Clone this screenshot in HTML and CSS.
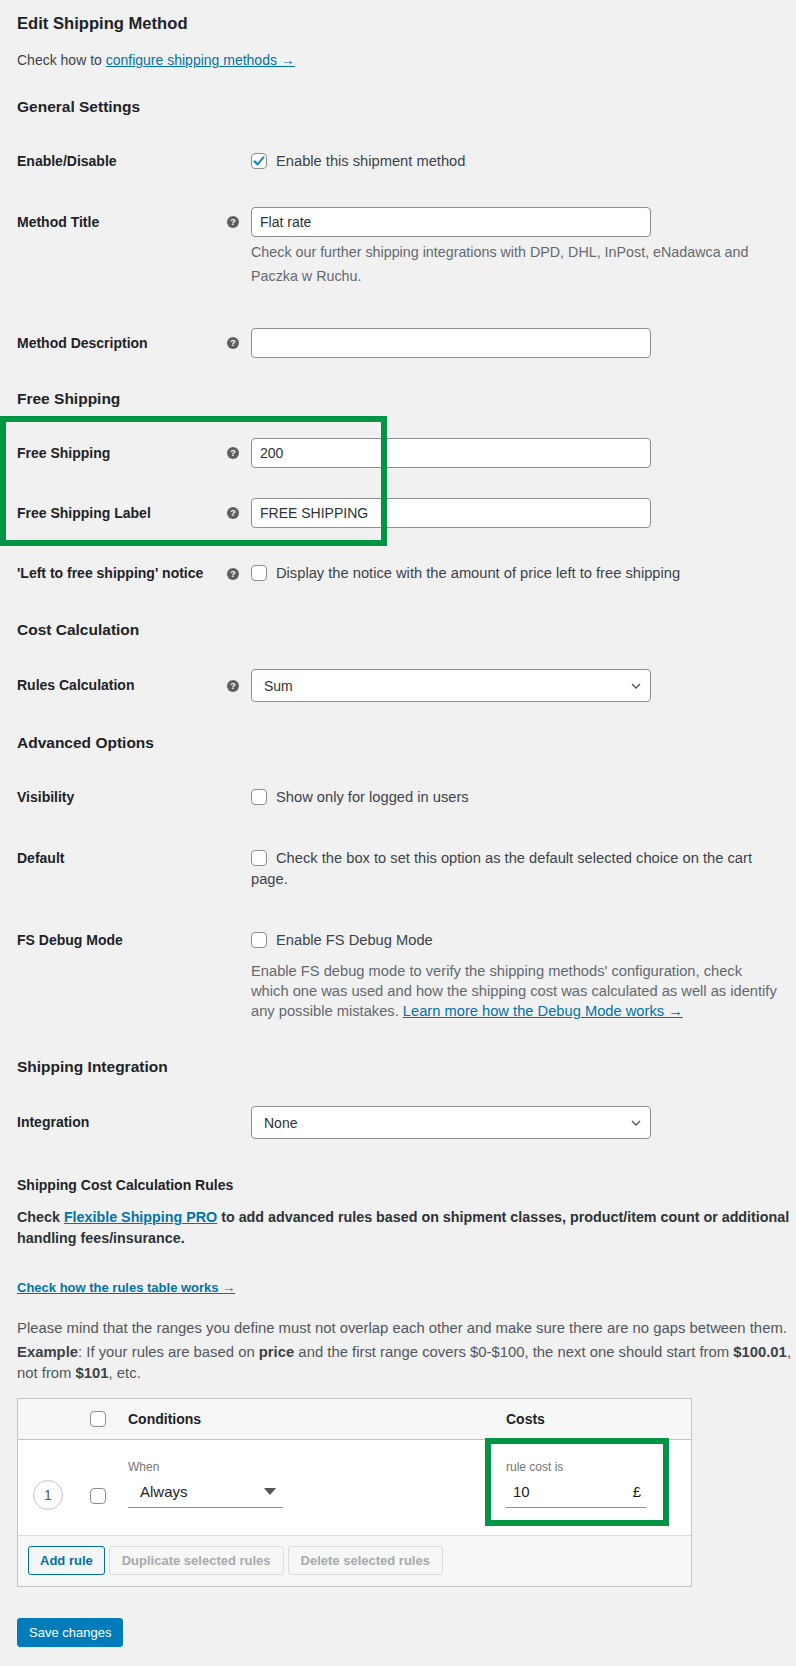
FILE: index.html
```html
<!DOCTYPE html>
<html lang="en">
<head>
<meta charset="utf-8">
<title>Edit Shipping Method</title>
<link rel="stylesheet" href="styles.css">
</head>
<body>
<div class="page">
  <h2 class="page-title">Edit Shipping Method</h2>
  <p class="intro">Check how to <a href="#">configure shipping methods →</a></p>

  <h3 class="section">General Settings</h3>
  <div class="row row-check">
    <div class="label">Enable/Disable</div>
    <div class="tip-col"></div>
    <div class="field"><label class="check"><span class="box checked"><svg viewBox="0 0 16 16" width="16" height="16"><path d="M3.6 8.4 L6.6 11.4 L12.4 4.4" fill="none" stroke="#1e8cbe" stroke-width="2.2" stroke-linecap="round" stroke-linejoin="round"/></svg></span>Enable this shipment method</label></div>
  </div>
  <div class="row row-input">
    <div class="label">Method Title</div>
    <div class="tip-col"><span class="tip">?</span></div>
    <div class="field">
      <input class="text-input" type="text" value="Flat rate">
      <p class="desc">Check our further shipping integrations with DPD, DHL, InPost, eNadawca and<br>Paczka w Ruchu.</p>
    </div>
  </div>
  <div class="row row-input">
    <div class="label">Method Description</div>
    <div class="tip-col"><span class="tip">?</span></div>
    <div class="field"><input class="text-input" type="text" value=""></div>
  </div>

  <h3 class="section">Free Shipping</h3>
  <div class="fs-group">
    <div class="row row-input">
      <div class="label">Free Shipping</div>
      <div class="tip-col"><span class="tip">?</span></div>
      <div class="field"><input class="text-input" type="text" value="200"></div>
    </div>
    <div class="row row-input">
      <div class="label">Free Shipping Label</div>
      <div class="tip-col"><span class="tip">?</span></div>
      <div class="field"><input class="text-input" type="text" value="FREE SHIPPING"></div>
    </div>
    <div class="annot annot-fs"></div>
  </div>
  <div class="row row-check">
    <div class="label">'Left to free shipping' notice</div>
    <div class="tip-col"><span class="tip">?</span></div>
    <div class="field"><label class="check"><span class="box"></span>Display the notice with the amount of price left to free shipping</label></div>
  </div>

  <h3 class="section">Cost Calculation</h3>
  <div class="row row-select">
    <div class="label">Rules Calculation</div>
    <div class="tip-col"><span class="tip">?</span></div>
    <div class="field">
      <div class="select"><span>Sum</span><svg viewBox="0 0 10 6" width="10" height="6"><path d="M1 1 L5 5 L9 1" fill="none" stroke="#50575e" stroke-width="1.4"/></svg></div>
    </div>
  </div>

  <h3 class="section">Advanced Options</h3>
  <div class="row row-check">
    <div class="label">Visibility</div>
    <div class="tip-col"></div>
    <div class="field"><label class="check"><span class="box"></span>Show only for logged in users</label></div>
  </div>
  <div class="row row-check">
    <div class="label">Default</div>
    <div class="tip-col"></div>
    <div class="field"><label class="check"><span class="box"></span>Check the box to set this option as the default selected choice on the cart<br>page.</label></div>
  </div>
  <div class="row row-check">
    <div class="label">FS Debug Mode</div>
    <div class="tip-col"></div>
    <div class="field">
      <label class="check"><span class="box"></span>Enable FS Debug Mode</label>
      <p class="note">Enable FS debug mode to verify the shipping methods' configuration, check<br>which one was used and how the shipping cost was calculated as well as identify<br>any possible mistakes. <a href="#">Learn more how the Debug Mode works →</a></p>
    </div>
  </div>

  <h3 class="section">Shipping Integration</h3>
  <div class="row row-select">
    <div class="label">Integration</div>
    <div class="tip-col"></div>
    <div class="field">
      <div class="select"><span>None</span><svg viewBox="0 0 10 6" width="10" height="6"><path d="M1 1 L5 5 L9 1" fill="none" stroke="#50575e" stroke-width="1.4"/></svg></div>
    </div>
  </div>

  <h4 class="rules-title">Shipping Cost Calculation Rules</h4>
  <p class="pro-note">Check <a href="#">Flexible Shipping PRO</a> to add advanced rules based on shipment classes, product/item count or additional<br>handling fees/insurance.</p>
  <p class="rules-link"><a href="#">Check how the rules table works →</a></p>
  <p class="mind">Please mind that the ranges you define must not overlap each other and make sure there are no gaps between them.</p>
  <p class="example"><strong>Example</strong>: If your rules are based on <strong>price</strong> and the first range covers $0-$100, the next one should start from <strong>$100.01</strong>,<br>not from <strong>$101</strong>, etc.</p>

  <div class="rules">
    <div class="rules-head">
      <div></div>
      <div class="cell-check"><span class="box"></span></div>
      <div class="th">Conditions</div>
      <div class="th">Costs</div>
    </div>
    <div class="rules-row">
      <div class="cell-num"><span class="num">1</span></div>
      <div class="cell-rowcheck"><span class="box"></span></div>
      <div class="cell-cond">
        <div class="mini">When</div>
        <div class="line-select"><span>Always</span><svg viewBox="0 0 12 7" width="12" height="7"><path d="M0 0 L12 0 L6 7 Z" fill="#555"/></svg></div>
      </div>
      <div class="cell-cost">
        <div class="mini">rule cost is</div>
        <div class="line-input"><span>10</span><span class="cur">£</span></div>
      </div>
    </div>
    <div class="rules-foot">
      <button class="btn btn-secondary" type="button">Add rule</button>
      <button class="btn btn-disabled" type="button">Duplicate selected rules</button>
      <button class="btn btn-disabled" type="button">Delete selected rules</button>
    </div>
    <div class="annot annot-cost"></div>
  </div>

  <button class="btn-primary" type="button">Save changes</button>
</div>
</body>
</html>
```

FILE: styles.css
```css
* { box-sizing: border-box; }
html, body { margin: 0; padding: 0; }
body {
  background: #f1f1f1;
  font-family: "Liberation Sans", Arial, sans-serif;
  font-size: 14px;
  color: #3c434a;
}
a { color: #0073aa; text-decoration: underline; }
.page { padding: 12px 0 40px 17px; }

.page-title {
  margin: 0;
  font-size: 16.6px;
  line-height: 24px;
  font-weight: 700;
  color: #1d2327;
}
.intro { margin: 14px 0 26px; line-height: 20px; }

.section {
  margin: 15px 0 13px;
  font-size: 15.5px;
  line-height: 22px;
  font-weight: 700;
  color: #1d2327;
}

.row {
  display: grid;
  grid-template-columns: 210px 24px 540px;
  align-items: start;
}
.row-input { padding: 15px 0; }
.row-select { padding: 15px 0; }
.row-check { padding: 20px 0; }

.label {
  font-weight: 700;
  color: #1d2327;
  white-space: nowrap;
}
.tip-col { display: flex; align-items: center; }
.row-input .label, .row-input .tip-col { line-height: 30px; height: 30px; }
.row-select .label, .row-select .tip-col { line-height: 33px; height: 33px; }
.row-check .label, .row-check .tip-col { line-height: 21px; height: 21px; }

.tip {
  width: 12px;
  height: 12px;
  border-radius: 50%;
  background: #5f5f5f;
  color: #fff;
  font-size: 9px;
  font-weight: 700;
  line-height: 12px;
  text-align: center;
}

.text-input {
  display: block;
  width: 400px;
  height: 30px;
  margin: 0;
  padding: 0 8px;
  border: 1px solid #8c8f94;
  border-radius: 4px;
  background: #fff;
  font-family: "Liberation Sans", Arial, sans-serif;
  font-size: 14px;
  color: #2c3338;
  outline: none;
}
.desc {
  margin: 3px 0 10px;
  font-size: 14.3px;
  line-height: 24px;
  color: #646970;
}

.check { display: block; font-size: 14.7px; line-height: 21px; color: #3c434a; }
.box {
  display: inline-block;
  width: 16px;
  height: 16px;
  border: 1px solid #8c8f94;
  border-radius: 4px;
  background: #fff;
  vertical-align: -3px;
  margin-right: 9px;
  position: relative;
}
.box svg { position: absolute; left: -1px; top: -1px; }

.note {
  margin: 10px 0 0;
  font-size: 14.7px;
  line-height: 20px;
  color: #646970;
}

.select {
  width: 400px;
  height: 33px;
  border: 1px solid #8c8f94;
  border-radius: 4px;
  background: #fff;
  display: flex;
  align-items: center;
  justify-content: space-between;
  padding: 0 9px 0 12px;
  color: #2c3338;
}

.fs-group { position: relative; }
.annot {
  position: absolute;
  border: 6px solid #009444;
  pointer-events: none;
}
.annot-fs { left: -17px; top: -7px; width: 387px; height: 130px; }

.rules-title {
  margin: 21px 0 0;
  font-size: 14px;
  line-height: 20px;
  font-weight: 700;
  color: #1d2327;
}
.pro-note {
  margin: 12px 0 0;
  font-size: 14.3px;
  line-height: 21px;
  font-weight: 700;
  color: #2c3338;
  white-space: nowrap;
}
.rules-link {
  margin: 29px 0 0;
  font-size: 13px;
  line-height: 20px;
  font-weight: 700;
}
.mind {
  margin: 19px 0 0;
  font-size: 14.85px;
  line-height: 22px;
  color: #50575e;
  white-space: nowrap;
}
.example {
  margin: 3px 0 0;
  font-size: 14.85px;
  line-height: 21px;
  color: #50575e;
  white-space: nowrap;
}
.example strong { color: #3c434a; }

.rules {
  position: relative;
  margin-top: 14px;
  width: 675px;
  border: 1px solid #c3c4c7;
  background: #fff;
}
.rules-head, .rules-row {
  display: grid;
  grid-template-columns: 72px 38px 378px 1fr;
}
.rules-head {
  height: 41px;
  align-items: center;
  background: #f6f7f7;
  border-bottom: 1px solid #c3c4c7;
}
.th { font-weight: 700; color: #1d2327; }
.rules-head .box { display: block; margin: 0; }

.rules-row {
  height: 96px;
  border-bottom: 1px solid #dcdcde;
  background: #fff;
}
.cell-num { display: flex; align-items: flex-end; padding: 0 0 25px 15px; }
.num {
  width: 30px;
  height: 30px;
  border: 1px solid #c3c4c7;
  border-radius: 50%;
  display: flex;
  align-items: center;
  justify-content: center;
  color: #50575e;
  font-size: 14px;
}
.cell-rowcheck { display: flex; align-items: flex-end; padding-bottom: 31px; }
.cell-rowcheck .box { display: block; margin: 0; }
.cell-cond, .cell-cost { padding-top: 19px; }
.mini { font-size: 12px; line-height: 16px; color: #757575; }
.line-select {
  width: 155px;
  height: 33px;
  border-bottom: 1px solid #8c8f94;
  display: flex;
  align-items: center;
  justify-content: space-between;
  padding: 0 7px 0 12px;
  font-size: 15px;
  color: #1e1e1e;
}
.line-input {
  width: 140px;
  height: 33px;
  border-bottom: 1px solid #8c8f94;
  display: flex;
  align-items: center;
  justify-content: space-between;
  padding: 0 5px 0 7px;
  font-size: 15px;
  color: #1e1e1e;
}
.cur { font-size: 15px; }

.rules-foot {
  display: flex;
  gap: 4px;
  padding: 10px 10px 11px;
  background: #f6f7f7;
}
.btn {
  height: 29px;
  padding: 0 11px;
  border-radius: 3px;
  font-family: "Liberation Sans", Arial, sans-serif;
  font-size: 13px;
  font-weight: 700;
  cursor: pointer;
}
.btn-secondary { border: 1px solid #0071a1; background: #f3f5f6; color: #0071a1; }
.btn-disabled { border: 1px solid #dcdcde; background: #f6f7f7; color: #a7aaad; padding: 0 12px; }
.annot-cost { left: 467px; top: 39px; width: 184px; height: 88px; }

.btn-primary {
  display: block;
  margin-top: 31px;
  height: 29px;
  padding: 0 11px;
  border: 1px solid #007cba;
  border-radius: 3px;
  background: #007cba;
  color: #fff;
  font-family: "Liberation Sans", Arial, sans-serif;
  font-size: 13px;
}
```
